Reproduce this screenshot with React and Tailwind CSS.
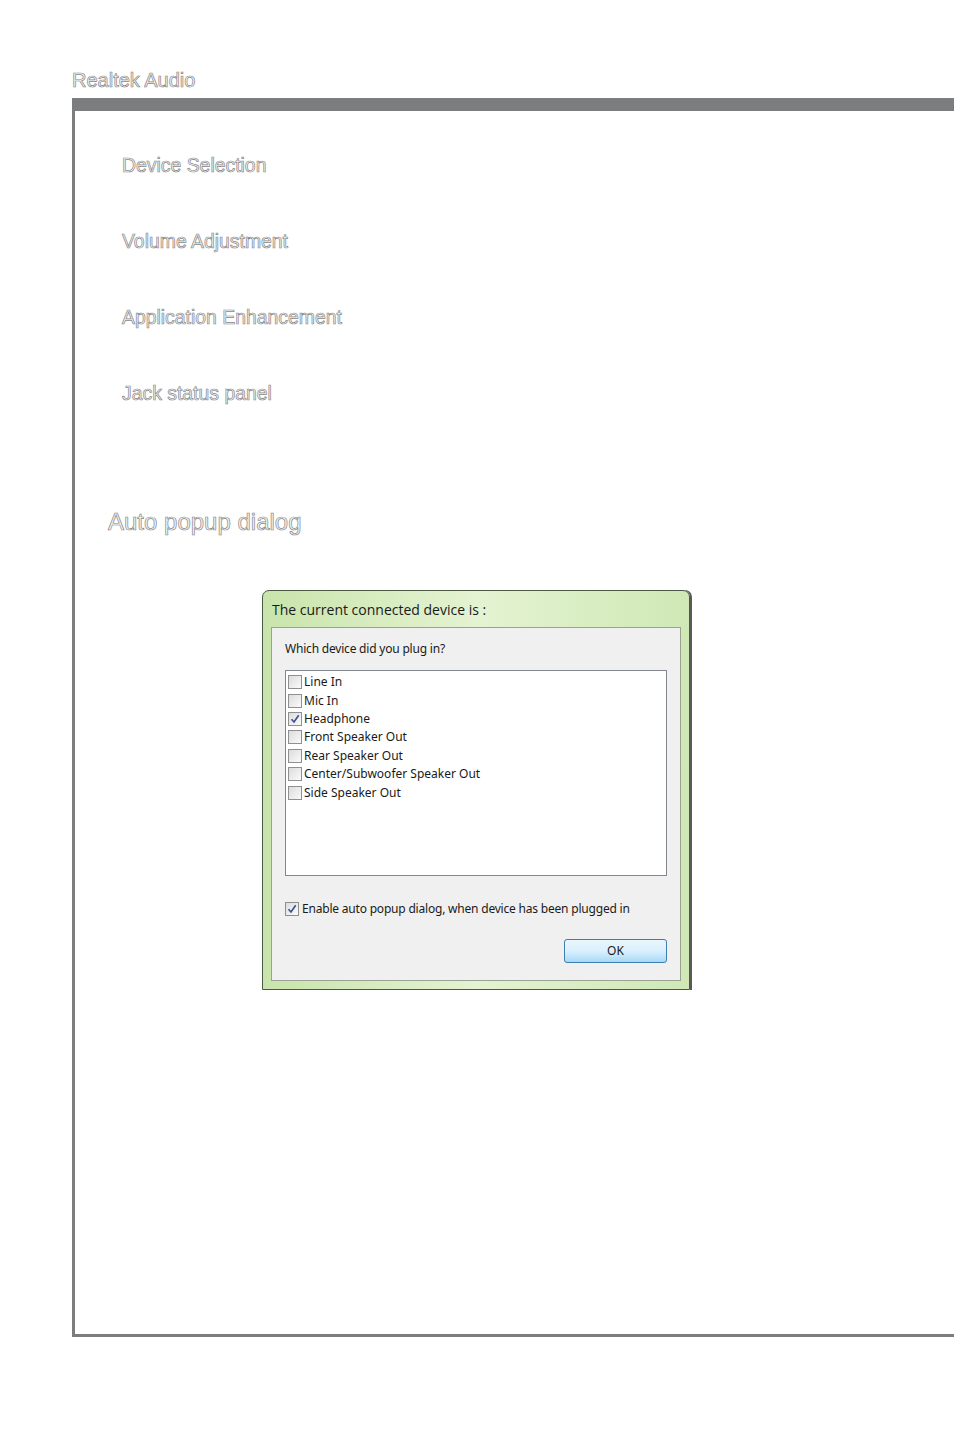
import React from 'react';

const outline = 'text-[#f6f6f6] [-webkit-text-stroke:0.7px_#888888] font-["Liberation_Sans",Arial,sans-serif]';

const sections = ['Device Selection', 'Volume Adjustment', 'Application Enhancement', 'Jack status panel'];

const devices = [
  { label: 'Line In', checked: false },
  { label: 'Mic In', checked: false },
  { label: 'Headphone', checked: true },
  { label: 'Front Speaker Out', checked: false },
  { label: 'Rear Speaker Out', checked: false },
  { label: 'Center/Subwoofer Speaker Out', checked: false },
  { label: 'Side Speaker Out', checked: false },
];

function CheckBox({ checked }) {
  return (
    <span className="w-[14px] h-[14px] border border-[#8e8f8f] bg-gradient-to-br from-[#dcdcdc] to-[#fbfbfb] flex items-center justify-center shrink-0">
      {checked && (
        <svg width="10" height="10" viewBox="0 0 10 10">
          <path d="M1.5 5.2 L4 8 L8.7 1.3" fill="none" stroke="#3b4f8f" strokeWidth="1.6" />
        </svg>
      )}
    </span>
  );
}

function AutoPopupDialog() {
  return (
    <div className="w-[428px] h-[400px] rounded-t-[7px] border border-[#4c5a44] bg-gradient-to-r from-[#c9e4ab] via-[#e4f3d2] to-[#cfe8b5] px-[8px] pb-[8px] flex flex-col shadow-[2px_0_0_#5a5a5a]">
      <div className="h-[36px] flex items-center pl-[1px] text-[14px] text-[#1a1a1a] font-['Open_Sans','Noto_Sans',sans-serif]">
        The current connected device is :
      </div>
      <div className="flex-1 bg-[#f0f0f0] border border-[#9aa393] px-[13px] font-['Noto_Sans','Open_Sans',sans-serif] text-[12px] text-[#1a1a1a] flex flex-col">
        <div className="mt-[12px] h-[18px] flex items-center tracking-[-0.2px]">Which device did you plug in?</div>
        <div className="mt-[12px] h-[206px] bg-white border border-[#828790] pt-[2px] pl-[2px] flex flex-col">
          {devices.map((d) => (
            <div key={d.label} className="h-[18.4px] flex items-center gap-[2px]">
              <CheckBox checked={d.checked} />
              <span>{d.label}</span>
            </div>
          ))}
        </div>
        <div className="mt-[24px] flex items-center gap-[3px] tracking-[-0.2px]">
          <CheckBox checked />
          <span>Enable auto popup dialog, when device has been plugged in</span>
        </div>
        <div className="mt-[21px] flex justify-end">
          <button className="w-[103px] h-[24px] rounded-[3px] border border-[#3c7fb1] bg-gradient-to-b from-[#eaf6fd] via-[#d9f0fc] to-[#a7d9f5] text-[12px] text-[#1a1a1a]">
            OK
          </button>
        </div>
      </div>
    </div>
  );
}

export default function App() {
  return (
    <div className="w-[954px] h-[1430px] bg-white pt-[69px] pl-[72px]">
      <div className={`${outline} text-[20px] leading-[22px]`}>Realtek Audio</div>
      <div className="mt-[7px] h-[1239px] border-l-[3px] border-b-[3px] border-[#7b7d7f] flex flex-col">
        <div className="h-[13px] bg-[#7b7d7f]"></div>
        <div className="pl-[47px] pt-[43px] flex flex-col gap-[54px]">
          {sections.map((s) => (
            <div key={s} className={`${outline} text-[19.4px] leading-[22px]`}>{s}</div>
          ))}
        </div>
        <div className={`${outline} text-[24px] leading-[28px] pl-[33px] mt-[104px]`}>Auto popup dialog</div>
        <div className="pl-[187px] mt-[54px]">
          <AutoPopupDialog />
        </div>
      </div>
    </div>
  );
}
